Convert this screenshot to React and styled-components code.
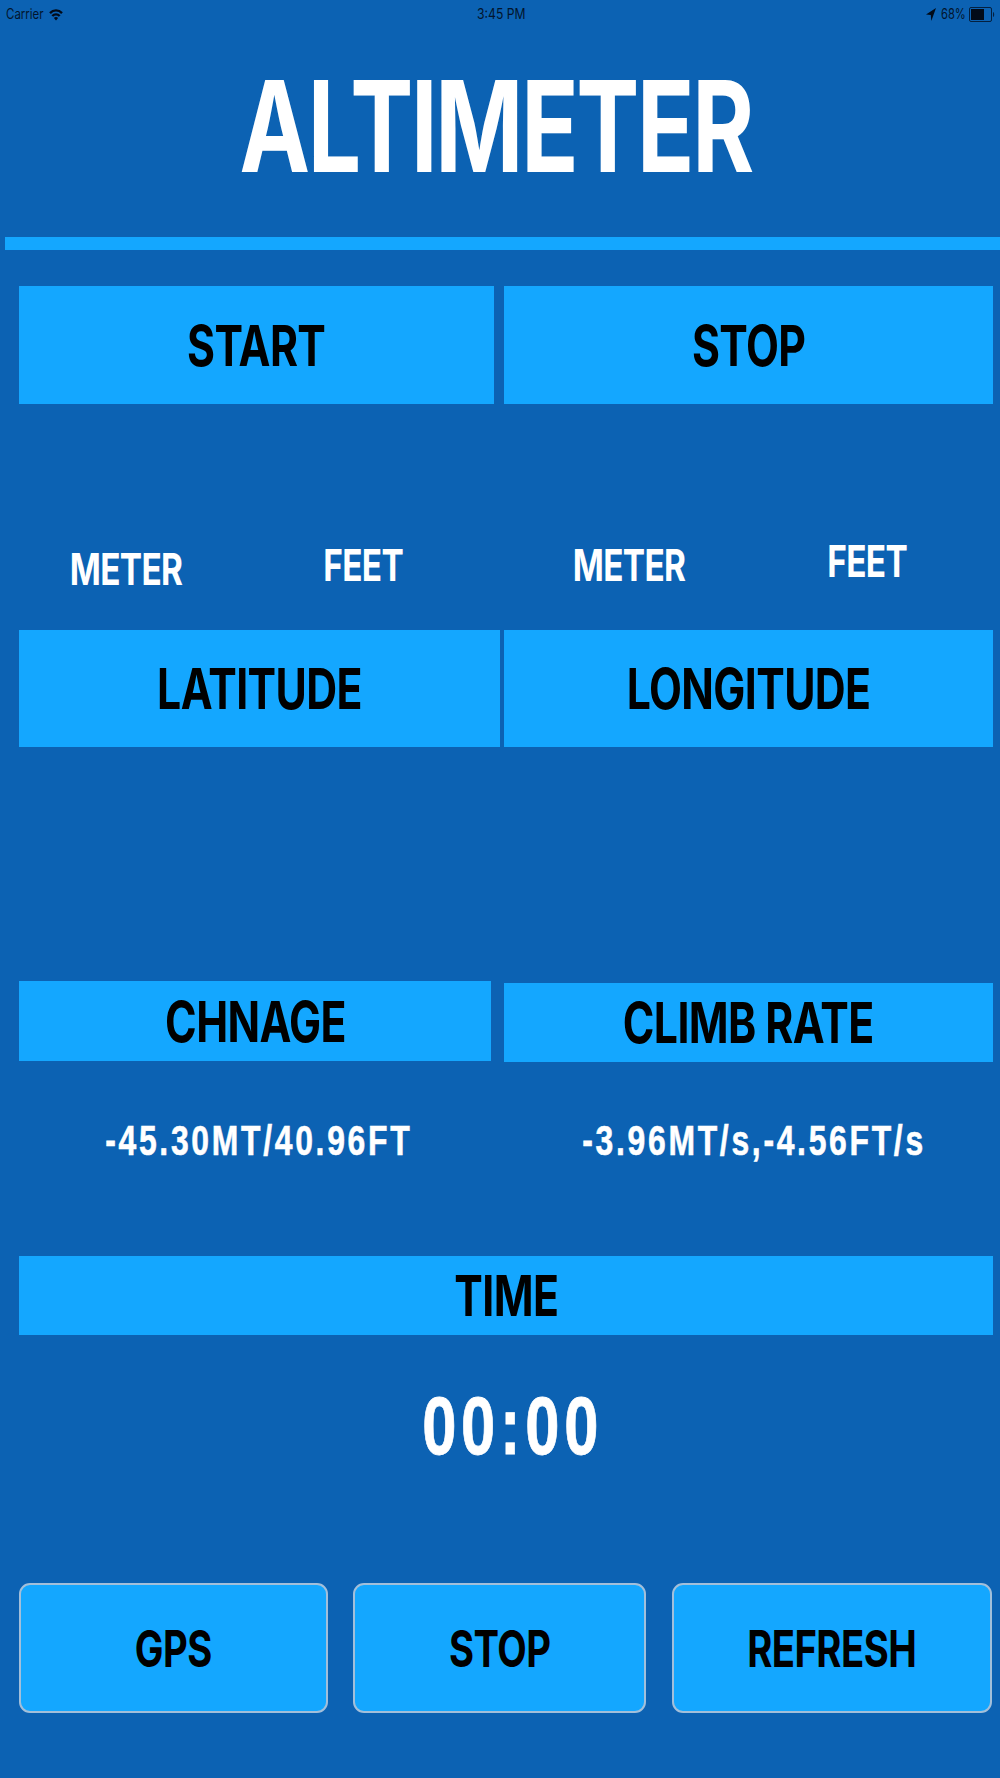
import React from 'react'
import styled, { createGlobalStyle } from 'styled-components'

const GlobalStyle = createGlobalStyle`
  body {
    margin: 0;
    background-color: #0c62b3;
  }
`

const Screen = styled.div`
  box-sizing: border-box;
  width: 1000px;
  height: 1778px;
  overflow: hidden;
  display: flex;
  flex-direction: column;
  background-color: #0c62b3;
  font-family: Inter, 'Liberation Sans', sans-serif;
  color: #000;
`

const StatusBar = styled.div`
  display: grid;
  grid-template-columns: 1fr auto 1fr;
  align-items: center;
  height: 28px;
  padding: 0 5px 0 6px;
  font-size: 14px;
  line-height: 28px;
  color: #02152d;
`

const StatusSide = styled.div`
  display: flex;
  align-items: center;
  justify-content: ${props => props.$end ? 'flex-end' : 'flex-start'};
`

const StatusText = styled.span`
  width: ${props => props.$width}px;
  white-space: nowrap;
  transform: scaleX(${props => props.$scale || 0.75});
  transform-origin: left center;
`

const WifiIcon = styled.svg`
  margin-left: 6px;
`

const ArrowIcon = styled.svg`
  margin-right: 5px;
`

const BatteryIcon = styled.svg`
  margin-left: 4px;
`

// glyphs are narrower than Inter draws them
const Condensed = styled.span`
  display: block;
  white-space: nowrap;
  transform: scaleX(0.75);
`

const Title = styled.h1`
  display: flex;
  justify-content: center;
  margin: 0;
  padding-right: 9px;
  height: 209px;
  font-size: 126px;
  font-weight: 700;
  line-height: 197px;
  letter-spacing: -0.024em;
  color: #fff;
`

const Rule = styled.div`
  height: 13px;
  margin-left: 5px;
  background-color: #14a7ff;
`

const Row = styled.div`
  display: grid;
  grid-template-columns: ${props => props.$columns};
  column-gap: ${props => props.$gap || 0}px;
  margin-top: ${props => props.$top}px;
  padding: 0 7px 0 19px;
`

const Tile = styled.div`
  display: flex;
  align-items: center;
  justify-content: center;
  height: ${props => props.$height || 117}px;
  margin-top: ${props => props.$drop || 0}px;
  background-color: #14a7ff;
  font-size: 57px;
  font-weight: 650;
  line-height: 1;
  letter-spacing: -0.014em;
`

const Units = styled.div`
  display: grid;
  grid-template-columns: 251px 224px 308px 168px;
  height: 50px;
  margin-top: 132px;
  font-size: 44.5px;
  font-weight: 650;
  line-height: 50px;
  letter-spacing: -0.02em;
  color: #fff;
`

const Unit = styled.div`
  display: flex;
  justify-content: center;
  margin-top: ${props => props.$drop || 0}px;
`

const Values = styled.div`
  display: grid;
  grid-template-columns: 518px 472px;
  height: 50px;
  margin-top: 54px;
  font-family: 'Liberation Sans', Arial, sans-serif;
  font-size: 42.5px;
  font-weight: 700;
  line-height: 50px;
  letter-spacing: 3.6px;
  color: #fff;
  -webkit-text-stroke: 0.6px #fff;
`

const Value = styled.div`
  display: flex;
  justify-content: center;
`

const Clock = styled.div`
  display: flex;
  justify-content: center;
  height: 90px;
  margin-top: 46px;
  padding-left: 26px;
  font-family: 'Liberation Sans', Arial, sans-serif;
  font-size: 82px;
  font-weight: 700;
  line-height: 90px;
  letter-spacing: 6.3px;
  color: #fff;
  -webkit-text-stroke: 0.8px #fff;
`

const Actions = styled.div`
  display: flex;
  margin-top: 112px;
  padding-left: 19px;
`

const Button = styled.button`
  box-sizing: border-box;
  display: flex;
  align-items: center;
  justify-content: center;
  width: ${props => props.$width}px;
  height: 130px;
  margin: 0 ${props => props.$after || 0}px 0 0;
  padding: 0;
  border: 2px solid #a3bfda;
  border-radius: 11px;
  background-color: #14a7ff;
  color: #000;
  font-family: inherit;
  font-size: 51px;
  font-weight: 650;
  line-height: 1;
  letter-spacing: -0.014em;
`

const App = () => (
  <>
    <GlobalStyle />
    <Screen>
      <StatusBar>
        <StatusSide>
          <StatusText $width={37} $scale={0.82}>Carrier</StatusText>
          <WifiIcon width="14" height="13" viewBox="0 0 14 13" fill="none" stroke="#020b18" strokeWidth="2.3">
            <path d="M1 5.1C4.4 1.5 9.6 1.5 13 5.1" />
            <path d="M3.3 8C5.4 5.7 8.6 5.7 10.7 8" />
            <path d="M4.9 9.9L7 12.4L9.1 9.9C7.9 8.7 6.1 8.7 4.9 9.9Z" fill="#020b18" stroke="none" />
          </WifiIcon>
        </StatusSide>
        <StatusText $width={48} $scale={0.87}>3:45 PM</StatusText>
        <StatusSide $end>
          <ArrowIcon width="10" height="13" viewBox="0 0 10 13">
            <path d="M10 0L0 6.6L4.8 7L5.3 13Z" fill="#020b18" />
          </ArrowIcon>
          <StatusText $width={24} $scale={0.8}>68%</StatusText>
          <BatteryIcon width="26" height="15" viewBox="0 0 26 15">
            <rect x="0.5" y="0.5" width="22" height="14" rx="1.5" fill="none" stroke="#04203f" />
            <rect x="2" y="2" width="13" height="11" fill="#020b18" />
            <path d="M24 5C25.6 5.6 25.6 9.4 24 10Z" fill="#04203f" />
          </BatteryIcon>
        </StatusSide>
      </StatusBar>

      <Title><Condensed>ALTIMETER</Condensed></Title>
      <Rule />

      <Row $columns="475px 489px" $gap={10} $top={36}>
        <Tile $height={118}><Condensed>START</Condensed></Tile>
        <Tile $height={118}><Condensed>STOP</Condensed></Tile>
      </Row>

      <Units>
        <Unit $drop={8}><Condensed>METER</Condensed></Unit>
        <Unit $drop={4}><Condensed>FEET</Condensed></Unit>
        <Unit $drop={4}><Condensed>METER</Condensed></Unit>
        <Unit><Condensed>FEET</Condensed></Unit>
      </Units>

      <Row $columns="481px 489px" $gap={4} $top={44}>
        <Tile><Condensed>LATITUDE</Condensed></Tile>
        <Tile><Condensed>LONGITUDE</Condensed></Tile>
      </Row>

      <Row $columns="472px 489px" $gap={13} $top={234}>
        <Tile $height={80}><Condensed>CHNAGE</Condensed></Tile>
        <Tile $height={79} $drop={2}><Condensed>CLIMB RATE</Condensed></Tile>
      </Row>

      <Values>
        <Value><Condensed>-45.30MT/40.96FT</Condensed></Value>
        <Value><Condensed>-3.96MT/s,-4.56FT/s</Condensed></Value>
      </Values>

      <Row $columns="974px" $top={90}>
        <Tile $height={79}><Condensed>TIME</Condensed></Tile>
      </Row>

      <Clock><Condensed>00:00</Condensed></Clock>

      <Actions>
        <Button $width={309} $after={25}><Condensed>GPS</Condensed></Button>
        <Button $width={293} $after={26}><Condensed>STOP</Condensed></Button>
        <Button $width={320}><Condensed>REFRESH</Condensed></Button>
      </Actions>
    </Screen>
  </>
)

export default App
